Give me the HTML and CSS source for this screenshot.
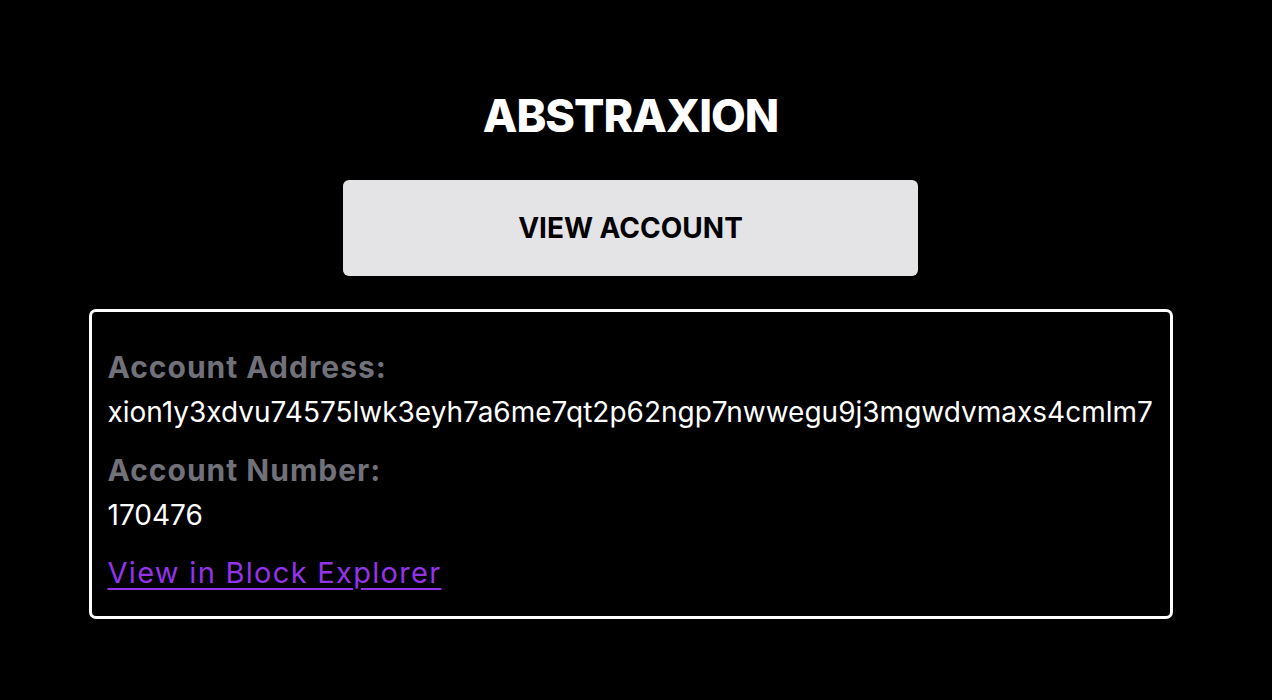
FILE: index.html
```html
<!DOCTYPE html>
<html>
<head>
<meta charset="utf-8">
<link rel="stylesheet" href="styles.css">
</head>
<body>
<main class="page">
  <h1 class="title">ABSTRAXION</h1>
  <button class="btn">VIEW ACCOUNT</button>
  <section class="card">
    <p class="label">Account Address:</p>
    <p class="value">xion1y3xdvu74575lwk3eyh7a6me7qt2p62ngp7nwwegu9j3mgwdvmaxs4cmlm7</p>
    <p class="label">Account Number:</p>
    <p class="value">170476</p>
    <a class="link" href="#">View in Block Explorer</a>
  </section>
</main>
</body>
</html>
```
FILE: styles.css
```css
html, body {
  margin: 0;
  background: #000;
  font-family: Inter, "Liberation Sans", sans-serif;
  color: #fff;
}
.page {
  width: 1261px;
  display: flex;
  flex-direction: column;
  align-items: center;
  padding-top: 88px;
}
.title {
  margin: 0;
  font-size: 45px;
  font-weight: 800;
  line-height: 56px;
  letter-spacing: -1px;
}
.btn {
  margin-top: 36px;
  width: 575px;
  height: 96px;
  border: none;
  border-radius: 6px;
  background: #e4e4e7;
  color: #000;
  font-family: inherit;
  font-size: 28px;
  font-weight: 700;
}
.card {
  margin-top: 33px;
  width: 1084px;
  box-sizing: border-box;
  border: 3px solid #fff;
  border-radius: 7px;
  padding: 35px 16px 23px;
  display: flex;
  flex-direction: column;
  align-items: flex-start;
}
.label {
  margin: 0 0 5px;
  font-size: 30px;
  font-weight: 700;
  color: #71717a;
  line-height: 40px;
  letter-spacing: 1px;
}
.value {
  margin: 0 0 18px;
  font-size: 28px;
  line-height: 40px;
}
.link {
  font-size: 29px;
  line-height: 40px;
  letter-spacing: 1.3px;
  color: #9333ea;
  text-underline-offset: 5px;
}
```
